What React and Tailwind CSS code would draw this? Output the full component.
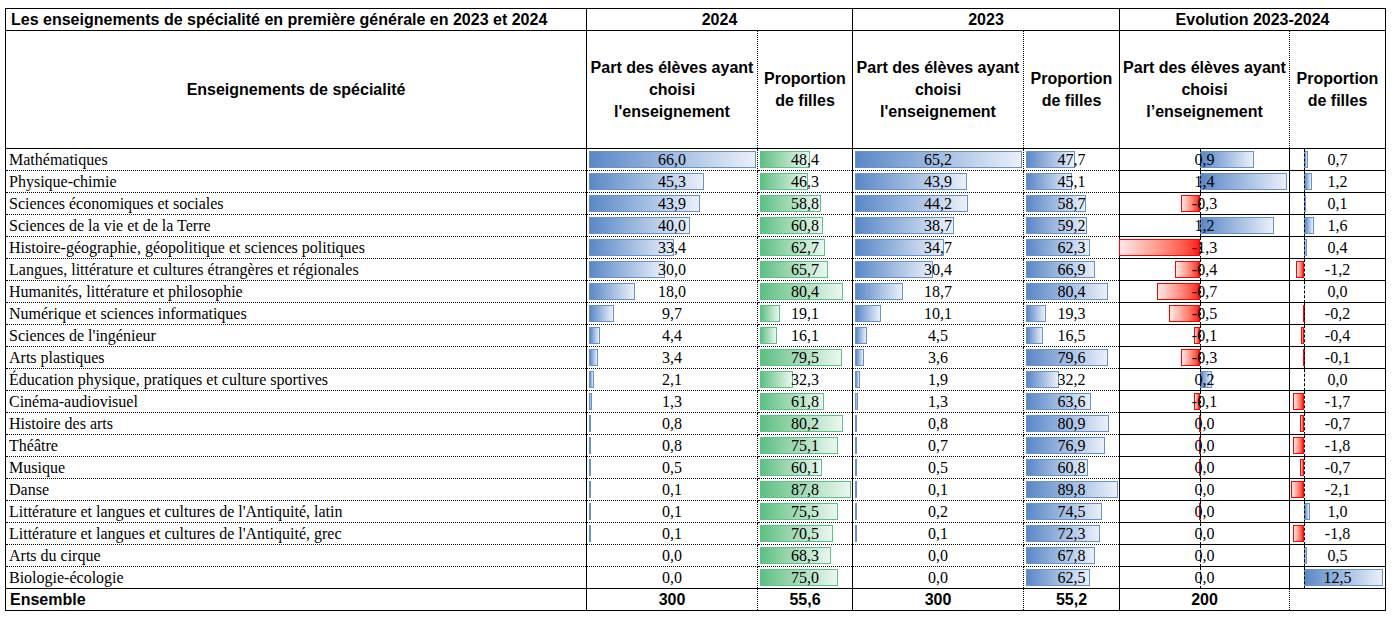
import React from 'react';

const rows = [
  ['Mathématiques', 66.0, 48.4, 65.2, 47.7, 0.87, 0.7],
  ['Physique-chimie', 45.3, 46.3, 43.9, 45.1, 1.4, 1.2],
  ['Sciences économiques et sociales', 43.9, 58.8, 44.2, 58.7, -0.3, 0.1],
  ['Sciences de la vie et de la Terre', 40.0, 60.8, 38.7, 59.2, 1.2, 1.6],
  ['Histoire-géographie, géopolitique et sciences politiques', 33.4, 62.7, 34.7, 62.3, -1.3, 0.4],
  ['Langues, littérature et cultures étrangères et régionales', 30.0, 65.7, 30.4, 66.9, -0.4, -1.2],
  ['Humanités, littérature et philosophie', 18.0, 80.4, 18.7, 80.4, -0.7, 0.0],
  ['Numérique et sciences informatiques', 9.7, 19.1, 10.1, 19.3, -0.5, -0.2],
  ["Sciences de l'ingénieur", 4.4, 16.1, 4.5, 16.5, -0.1, -0.4],
  ['Arts plastiques', 3.4, 79.5, 3.6, 79.6, -0.3, -0.1],
  ['Éducation physique, pratiques et culture sportives', 2.1, 32.3, 1.9, 32.2, 0.2, 0.0],
  ['Cinéma-audiovisuel', 1.3, 61.8, 1.3, 63.6, -0.1, -1.7],
  ['Histoire des arts', 0.8, 80.2, 0.8, 80.9, -0.02, -0.7],
  ['Théâtre', 0.8, 75.1, 0.7, 76.9, -0.02, -1.8],
  ['Musique', 0.5, 60.1, 0.5, 60.8, -0.02, -0.7],
  ['Danse', 0.1, 87.8, 0.1, 89.8, 0.0, -2.1],
  ["Littérature et langues et cultures de l'Antiquité, latin", 0.1, 75.5, 0.2, 74.5, -0.02, 1.0],
  ["Littérature et langues et cultures de l'Antiquité, grec", 0.1, 70.5, 0.1, 72.3, 0.0, -1.8],
  ['Arts du cirque', 0.0, 68.3, 0.0, 67.8, 0.0, 0.5],
  ['Biologie-écologie', 0.0, 75.0, 0.0, 62.5, 0.0, 12.5],
];

const blue = 'bg-linear-to-r from-[#5a88c6] to-[#ebf0f9] border border-[#6892cf]';
const green = 'bg-linear-to-r from-[#5bbf83] to-[#ebf7f0] border border-[#5dc285]';
const red = 'bg-linear-to-r from-[#ffe8e8] to-[#ff1010] border border-[#ff0000]';

const fmt = (v) => {
  let s = v.toFixed(1);
  if (s === '-0.0') s = '0.0';
  return s.replace('.', ',');
};

const sans = "font-['Liberation_Sans',Arial,sans-serif] font-bold text-[16px] text-black";
const serif = "font-['Liberation_Serif','Times_New_Roman',serif] text-[16px] text-black";

// data bar for positive-only columns
function PosCell({ v, max, span, tone }) {
  const width = (v / max) * span;
  return (
    <div className="relative h-[21px]">
      {width > 0 && (
        <div className={`absolute top-[2px] h-[17px] left-[2px] box-border ${tone}`} style={{ width: Math.max(width, 1) }} />
      )}
      <span className="relative block text-center leading-[21px]">{fmt(v)}</span>
    </div>
  );
}

// diverging bar around an axis
function DivCell({ v, axis, unit }) {
  const len = Math.abs(v) * unit;
  return (
    <div className="relative h-[21px]">
      {len > 0 && (
        <div
          className={`absolute top-[2px] h-[17px] box-border ${v < 0 ? red : blue}`}
          style={v < 0 ? { left: axis - len, width: Math.max(len, 1) } : { left: axis, width: Math.max(len, 1) }}
        />
      )}
      <div className="absolute top-0 bottom-[-1px] border-l border-dashed border-black" style={{ left: axis }} />
      <span className="relative block text-center leading-[21px]">{fmt(v)}</span>
    </div>
  );
}

export default function App() {
  const dotB = '[border-bottom-style:dotted]';
  const dotR = '[border-right-style:dotted]';
  const dotL = '[border-left-style:dotted]';
  return (
    <div className="bg-white w-[1394px] h-[621px] pt-[8px] pl-[5px]">
      <table className="border-collapse table-fixed w-[1380px]">
        <colgroup>
          <col className="w-[581px]" />
          <col className="w-[171px]" />
          <col className="w-[95px]" />
          <col className="w-[171px]" />
          <col className="w-[96px]" />
          <col className="w-[170px]" />
          <col className="w-[96px]" />
        </colgroup>
        <tbody>
          {/* titre */}
          <tr className="h-[22px]">
            <td className={`${sans} border border-black p-0 pl-[5px] text-left leading-[21px]`}>
              Les enseignements de spécialité en première générale en 2023 et 2024
            </td>
            <td colSpan={2} className={`${sans} border border-black p-0 text-center leading-[21px]`}>2024</td>
            <td colSpan={2} className={`${sans} border border-black p-0 text-center leading-[21px]`}>2023</td>
            <td colSpan={2} className={`${sans} border border-black p-0 text-center leading-[21px]`}>Evolution 2023-2024</td>
          </tr>

          {/* en-têtes */}
          <tr className="h-[118px]">
            <td className={`${sans} border border-black p-0 text-center align-middle`}>Enseignements de spécialité</td>
            <td className={`${sans} border border-black ${dotR} p-0 text-center align-middle leading-[22px]`}>
              Part des élèves ayant<br />choisi<br />l'enseignement
            </td>
            <td className={`${sans} border border-black ${dotL} p-0 text-center align-middle leading-[22px]`}>
              Proportion<br />de filles
            </td>
            <td className={`${sans} border border-black ${dotR} p-0 text-center align-middle leading-[22px]`}>
              Part des élèves ayant<br />choisi<br />l'enseignement
            </td>
            <td className={`${sans} border border-black ${dotL} p-0 text-center align-middle leading-[22px]`}>
              Proportion<br />de filles
            </td>
            <td className={`${sans} border border-black ${dotR} p-0 text-center align-middle leading-[22px]`}>
              Part des élèves ayant<br />choisi<br />l’enseignement
            </td>
            <td className={`${sans} border border-black ${dotL} p-0 text-center align-middle leading-[22px]`}>
              Proportion<br />de filles
            </td>
          </tr>

          {rows.map((r, i) => (
            <tr key={i} className="h-[22px]">
              <td className={`${serif} border-l border-r border-b border-black ${dotB} p-0 pl-[3px] leading-[21px] whitespace-nowrap`}>{r[0]}</td>
              <td className={`${serif} border-r border-b border-black ${dotB} ${dotR} p-0`}>
                <PosCell v={r[1]} max={66.0} span={167} tone={blue} />
              </td>
              <td className={`${serif} border-r border-b border-black ${dotB} p-0`}>
                <PosCell v={r[2]} max={87.8} span={91} tone={green} />
              </td>
              <td className={`${serif} border-r border-b border-black ${dotB} ${dotR} p-0`}>
                <PosCell v={r[3]} max={65.2} span={167} tone={blue} />
              </td>
              <td className={`${serif} border-r border-b border-black ${dotB} p-0`}>
                <PosCell v={r[4]} max={89.8} span={92} tone={blue} />
              </td>
              <td className={`${serif} border-r border-b border-black p-0`}>
                <DivCell v={r[5]} axis={80} unit={62} />
              </td>
              <td className={`${serif} border-r border-b border-black p-0`}>
                <DivCell v={r[6]} axis={14} unit={6.3} />
              </td>
            </tr>
          ))}

          {/* total */}
          <tr className="h-[22px]">
            <td className={`${sans} border border-black p-0 pl-[4px] leading-[21px]`}>Ensemble</td>
            <td className={`${sans} border border-black ${dotR} p-0 text-center leading-[21px]`}>300</td>
            <td className={`${sans} border border-black ${dotL} p-0 text-center leading-[21px]`}>55,6</td>
            <td className={`${sans} border border-black ${dotR} p-0 text-center leading-[21px]`}>300</td>
            <td className={`${sans} border border-black ${dotL} p-0 text-center leading-[21px]`}>55,2</td>
            <td className={`${sans} border border-black ${dotR} p-0 text-center leading-[21px]`}>200</td>
            <td className={`${sans} border border-black ${dotL} p-0 text-center leading-[21px]`}></td>
          </tr>
        </tbody>
      </table>
    </div>
  );
}
